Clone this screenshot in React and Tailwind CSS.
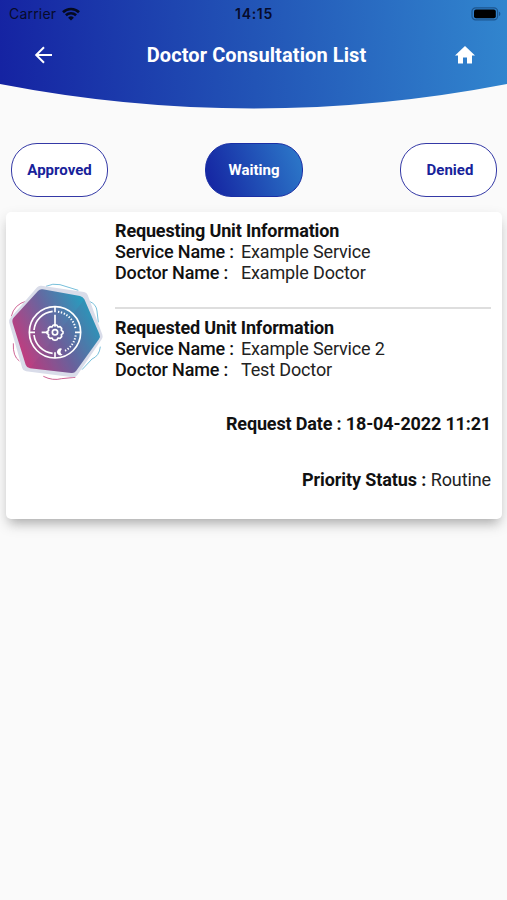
import React from "react";

function StatusBar() {
  return (
    <div className="flex h-7 items-center justify-between pl-[9px] pr-[5px] font-['Inter','Liberation_Sans',sans-serif] text-[#070b2b]">
      <div className="flex w-[98px] items-center gap-[6px]">
        <span className="text-[14px] leading-7 tracking-[0.2px]">Carrier</span>
        <svg className="h-[14px] w-[18px]" viewBox="0 0 18 14" fill="none" stroke="#050a20" strokeWidth="2.6">
          <path d="M1 5.2C5.4.9 12.6.9 17 5.2" />
          <path d="M3.9 8.3c2.9-2.7 7.3-2.7 10.2 0" />
          <path d="M9 13.6 6.1 10.7a4.1 4.1 0 0 1 5.8 0Z" fill="#050a20" stroke="none" />
        </svg>
      </div>
      <span className="text-[14px] font-semibold leading-7 tracking-[0.7px]">14:15</span>
      <div className="flex w-[101px] justify-end">
        <svg className="h-[14px] w-[31px]" viewBox="0 0 31 14">
          <rect x="1" y=".8" width="25.6" height="12" rx="3.6" fill="none" stroke="#1d568f" strokeWidth="1.2" />
          <rect x="3" y="2.6" width="21.8" height="8.6" rx="2" fill="#000" />
          <path d="M28 4.8c1.8.5 1.8 3.7 0 4.2Z" fill="#1d568f" />
        </svg>
      </div>
    </div>
  );
}

function Header() {
  return (
    <header className="relative h-[109px]">
      <svg className="absolute inset-0 h-[109px] w-full" viewBox="0 0 507 109" preserveAspectRatio="none">
        <defs>
          <linearGradient id="head" gradientUnits="userSpaceOnUse" x1="0" y1="70" x2="507" y2="38">
            <stop offset="0" stopColor="#1523a2" />
            <stop offset=".5" stopColor="#2254b6" />
            <stop offset="1" stopColor="#3185ce" />
          </linearGradient>
        </defs>
        <path d="M0 0H507V84Q253.500 133 0 84Z" fill="url(#head)" />
      </svg>
      <div className="relative">
        <StatusBar />
        <div className="flex h-[54px] items-center justify-between pl-[31px] pr-[30px] text-white">
          <svg className="h-6 w-6" viewBox="0 0 24 24" fill="none" stroke="white" strokeWidth="2">
            <path d="M21 12H6M13 4.200 5.200 12 13 19.800" />
          </svg>
          <h1 className="pl-[5px] text-[20px] font-bold leading-6 tracking-[0.1px]">Doctor Consultation List</h1>
          <svg className="h-6 w-6" viewBox="0 0 24 24" fill="white">
            <path d="M10 20.500v-6h4v6h5v-8h3L12 3 2 12.500h3v8z" />
          </svg>
        </div>
      </div>
    </header>
  );
}

function UnitIcon() {
  return (
    <svg className="h-[98px] w-[96px]" viewBox="24 24 288 294" fill="none">
      <defs>
        <linearGradient id="unit" gradientUnits="userSpaceOnUse" x1="62" y1="222" x2="268" y2="116">
          <stop offset="0" stopColor="#bd3e80" />
          <stop offset=".5" stopColor="#69659f" />
          <stop offset="1" stopColor="#299bbd" />
        </linearGradient>
      </defs>
      <g strokeWidth="2.500">
        <path d="M138 34Q158 24 180 29L235 46M270 80Q289 88 291 108L295 142M301 215Q298 243 276 252L246 284" stroke="#5bb2d2" />
        <path d="M80 78Q42 88 34 124M40 205Q38 244 58 258M130 304Q158 318 185 311L226 307" stroke="#c4467f" />
      </g>
      <path d="M122 46 250 65 294 184 220 293 80 275 41 139Z" fill="#d9dce9" stroke="#d9dce9" strokeWidth="28" strokeLinejoin="round" />
      <path d="M128 43 240 63Q249 65 253 73L298 177Q302 185 297 192L228 288Q223 295 214 294L90 280Q80 278 77 269L38 144Q35 134 42 127L114 48Q120 41 128 43Z" fill="url(#unit)" />
      <path d="M253 73 298 177Q302 185 297 192L228 288Q223 295 214 294L90 280Z" fill="#713a7c" opacity=".1" />
      <g stroke="white" strokeWidth="5">
        <circle cx="165" cy="172" r="77" />
        <path d="M165 95v17M165 232v17M88 172h17M225 172h17M165 119v36M125 172h21" />
        <path d="M158 109A63 63 0 0 0 102 165M102 180A63 63 0 0 0 158 235" />
        <path d="M174 110A63 63 0 0 1 227 164M227 181A63 63 0 0 1 192 229" strokeWidth="6" strokeDasharray="4 5" />
        <path d="m159 151 6-2 6 2 3 5 6-1 5 5-1 6 5 4v5l-5 4 1 6-5 5-6-1-3 5-6 2-6-2-3-5-6 1-5-5 1-6-5-4v-5l5-4-1-6 5-5 6 1Z" strokeLinejoin="round" />
        <circle cx="165" cy="172" r="8" />
      </g>
      <path d="M186 221A10.500 10.500 0 1 0 188 239Q176 233 186 221Z" fill="white" />
    </svg>
  );
}

function Field({ label, value }) {
  return (
    <div className="flex">
      <span className="w-[126px] font-medium">{label}</span>
      <span className="text-[#222]">{value}</span>
    </div>
  );
}

function Unit({ title, service, doctor }) {
  return (
    <div>
      <h2 className="font-bold">{title}</h2>
      <Field label="Service Name :" value={service} />
      <Field label="Doctor Name :" value={doctor} />
    </div>
  );
}

export default function App() {
  return (
    <main className="h-[900px] w-full overflow-hidden bg-[#fafafa] font-['Roboto',sans-serif]">
      <Header />
      <nav className="mt-[34px] flex justify-between pl-[11px] pr-[10px] text-[15px] font-bold text-[#17229a]">
        <button className="h-[54px] w-[97px] rounded-[26px] border-[1.5px] border-[#3439a6] bg-white">Approved</button>
        <button className="h-[54px] w-[98px] rounded-[26px] border border-[#1a2fa5] bg-[linear-gradient(70deg,#1525a2_5%,#2d7bca_100%)] text-white">Waiting</button>
        <button className="h-[54px] w-[97px] rounded-[26px] border-[1.5px] border-[#3439a6] bg-white pl-[3px]">Denied</button>
      </nav>
      <section className="ml-[6px] mr-[5px] mt-[15px] flex h-[307px] rounded-[5px] bg-white pl-[2px] pr-[11px] text-[18px] leading-[20.8px] tracking-[-0.155px] text-[#111] shadow-[0_8px_10px_-5px_rgba(0,0,0,0.2),0_6px_14px_rgba(0,0,0,0.15)]">
        <div className="w-[107px] shrink-0 pt-[71px]">
          <UnitIcon />
        </div>
        <div className="flex-1 pt-[9px]">
          <Unit title="Requesting Unit Information" service="Example Service" doctor="Example Doctor" />
          <hr className="mb-[9px] mt-[24px] border-t-2 border-[#dedede]" />
          <Unit title="Requested Unit Information" service="Example Service 2" doctor="Test Doctor" />
          <p className="mt-[33px] text-right font-bold">Request Date : 18-04-2022 11:21</p>
          <p className="mt-[35px] text-right tracking-[-0.1px]"><span className="font-bold">Priority Status :</span> <span className="text-[#222]">Routine</span></p>
        </div>
      </section>
    </main>
  );
}
